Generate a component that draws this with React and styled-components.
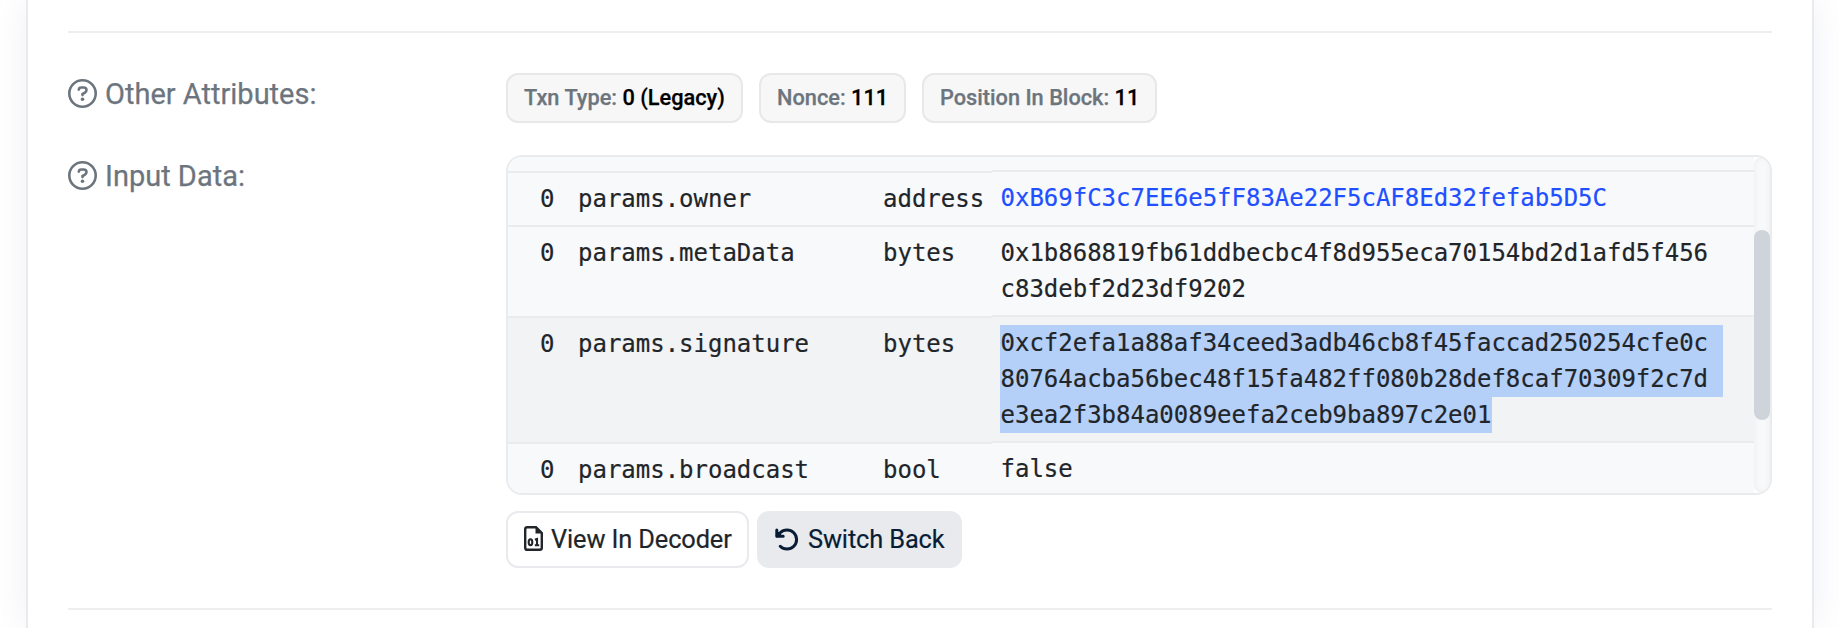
import React from "react";
import styled, { createGlobalStyle } from "styled-components";

const Global = createGlobalStyle`
  * { box-sizing: border-box; }
  body { margin: 0; background: #fff; overflow: hidden; font-family: Roboto, "Liberation Sans", sans-serif; }
`;

const Page = styled.main`
  height: 628px;
  padding: 0 24px 0 26px;
  overflow: hidden;
`;

const Card = styled.section`
  height: 628px;
  border: solid #e9eaee;
  border-width: 0 2px;
  padding: 31px 40px 0;
  box-shadow: 0 0 32px rgba(140, 152, 190, 0.14);
`;

const Divider = styled.hr`
  height: 2px;
  margin: 0;
  border: 0;
  background: #edeef0;
`;

const Row = styled.div`
  display: grid;
  grid-template-columns: 438px 1266px;
  padding-top: ${(p) => p.$top}px;
`;

const Label = styled.div`
  display: flex;
  align-items: flex-start;
  gap: 8px;
  height: 44px;
  color: #6c757d;
  font-size: 29px;
  line-height: 42px;
  white-space: nowrap;
  -webkit-text-stroke: 0.25px currentColor;
  svg { margin-top: 6px; flex: none; }
`;

const Badges = styled.div`
  display: flex;
  gap: 16px;
`;

const Badge = styled.div`
  width: ${(p) => p.$width}px;
  height: 50px;
  padding-left: 16px;
  border: 2px solid #e7e8e9;
  border-radius: 12px;
  background: #f7f7f7;
  color: #6c757d;
  font-size: 21.75px;
  font-weight: 500;
  line-height: 46px;
  white-space: nowrap;
  -webkit-text-stroke: 0.25px currentColor;
  b { color: #000; font-weight: 500; }
`;

const DataBox = styled.div`
  display: flex;
  height: 340px;
  border: 2px solid #e9ebed;
  border-radius: 16px;
  overflow: hidden;
`;

const Params = styled.div`
  display: grid;
  grid-template-columns: 484px 762px;
  width: 1246px;
  background: #f8f9fb;
  color: #212529;
  font-family: "DejaVu Sans Mono", "Liberation Mono", monospace;
  font-size: 24px;
  letter-spacing: -0.01px;
  line-height: 36px;
  -webkit-text-stroke: 0.2px currentColor;
`;

const Column = styled.div`
  display: flex;
  flex-direction: column;
  padding-top: ${(p) => p.$top}px;
`;

const Meta = styled.div`
  display: grid;
  grid-template-columns: 70px 305px 109px;
  height: ${(p) => p.$height}px;
  padding-top: 8px;
  border-top: 2px solid #e9ebed;
  background: ${(p) => (p.$hover ? "#f1f3f5" : "transparent")};
  span:first-child { padding-left: 32px; }
`;

const Value = styled.div`
  height: ${(p) => p.$height}px;
  padding: 8px 0 0 8px;
  border-top: 2px solid #e9ebed;
  background: ${(p) => (p.$hover ? "#f1f3f5" : "transparent")};
  color: ${(p) => (p.$link ? "#1f4fff" : "inherit")};
`;

const Line = styled.div`
  width: ${(p) => (p.$width ? p.$width + "px" : "auto")};
  height: 36px;
  text-indent: 0.5px;
  white-space: nowrap;
  background: ${(p) => (p.$selected ? "#b4d0f8" : "transparent")};
`;

const Track = styled.div`
  width: 16px;
  height: 336px;
  padding-top: 73px;
  border-radius: 8px;
  background: #f8f9fa;
  box-shadow: inset 0 0 6px rgba(0, 0, 0, 0.06);
`;

const Thumb = styled.div`
  height: 190px;
  border-radius: 8px;
  background: #ced4d9;
`;

const Buttons = styled.div`
  display: flex;
  gap: 8px;
  padding: 16px 0 40px;
`;

const Button = styled.button`
  display: flex;
  align-items: center;
  gap: ${(p) => p.$gap}px;
  width: ${(p) => p.$width}px;
  height: 57px;
  padding: 0 0 0 16px;
  border: 2px solid #e9eaee;
  border-radius: 12px;
  background: ${(p) => (p.$filled ? "#e9eaee" : "#fff")};
  color: ${(p) => (p.$filled ? "#081d35" : "#212529")};
  font: 400 25.375px/53px Roboto, "Liberation Sans", sans-serif;
  letter-spacing: -0.12px;
  white-space: nowrap;
  -webkit-text-stroke: 0.2px currentColor;
  svg { flex: none; margin-bottom: 2px; }
`;

const HelpIcon = () => (
  <svg width="29" height="29" viewBox="0 0 29 29" fill="none" stroke="currentColor">
    <circle cx="14.5" cy="14.5" r="13.2" strokeWidth="2.6" />
    <path d="M10.8 10.6Q11.1 8.5 13.2 8.5H15.6Q18.5 8.5 18.5 11.1Q18.5 12.7 17 13.6L14.5 15.1V16.1" strokeWidth="2.6" strokeLinecap="round" />
    <circle cx="14.5" cy="20.2" r="1.8" fill="currentColor" stroke="none" />
  </svg>
);

const FileIcon = () => (
  <svg width="19" height="25" viewBox="0 0 19 25" fill="none" stroke="currentColor">
    <path d="M3.2 1.2H12L17.8 7V21.8Q17.8 23.8 15.8 23.8H3.2Q1.2 23.8 1.2 21.8V3.2Q1.2 1.2 3.2 1.2Z" strokeWidth="2.4" />
    <path d="M11.5 1V7.5H18Z" fill="currentColor" stroke="none" />
    <ellipse cx="6.5" cy="16.2" rx="1.8" ry="2.9" strokeWidth="2.1" />
    <path d="M10.9 13.7L13 13V19.1M10.8 19.2H15.2" strokeWidth="2.1" />
  </svg>
);

const UndoIcon = () => (
  <svg width="24" height="24" viewBox="0 0 24 24" fill="none" stroke="currentColor" strokeWidth="3" strokeLinecap="round" strokeLinejoin="round">
    <path d="M1.8 3V9.2H8.2" />
    <path d="M2.2 8.8L5.2 5.7A9.6 9.6 0 1 1 5.2 19.3" />
    <path d="M1.8 4.2V9.2H6.8Z" fill="currentColor" strokeWidth="1" />
  </svg>
);

const PARAMS = [
  { name: "params.owner", type: "address", h: 54, vh: 55, lines: [["0xB69fC3c7EE6e5fF83Ae22F5cAF8Ed32fefab5D5C"]], link: true },
  { name: "params.metaData", type: "bytes", h: 91, vh: 90, lines: [["0x1b868819fb61ddbecbc4f8d955eca70154bd2d1afd5f456"], ["c83debf2d23df9202"]] },
  { name: "params.signature", type: "bytes", h: 126, vh: 126, hover: true, lines: [["0xcf2efa1a88af34ceed3adb46cb8f45faccad250254cfe0c", 723], ["80764acba56bec48f15fa482ff080b28def8caf70309f2c7d", 723], ["e3ea2f3b84a0089eefa2ceb9ba897c2e01", 492]] },
  { name: "params.broadcast", type: "bool", h: 54, vh: 54, lines: [["false"]] },
];

export default function App() {
  return (
    <Page>
      <Global />
      <Card>
        <Divider />
        <Row $top={40}>
          <Label><HelpIcon />Other Attributes:</Label>
          <Badges>
            <Badge $width={237}>Txn Type: <b>0 (Legacy)</b></Badge>
            <Badge $width={147}>Nonce: <b>111</b></Badge>
            <Badge $width={235}>Position In Block: <b>11</b></Badge>
          </Badges>
        </Row>
        <Row $top={32}>
          <Label><HelpIcon />Input Data:</Label>
          <div>
            <DataBox>
              <Params>
                <Column $top={14}>
                  {PARAMS.map((p) => (
                    <Meta key={p.name} $height={p.h} $hover={p.hover}>
                      <span>0</span><span>{p.name}</span><span>{p.type}</span>
                    </Meta>
                  ))}
                </Column>
                <Column $top={13}>
                  {PARAMS.map((p) => (
                    <Value key={p.name} $height={p.vh} $hover={p.hover} $link={p.link}>
                      {p.lines.map(([text, width]) => (
                        <Line key={text} $width={width} $selected={!!width}>{text}</Line>
                      ))}
                    </Value>
                  ))}
                </Column>
              </Params>
              <Track><Thumb /></Track>
            </DataBox>
            <Buttons>
              <Button $width={243} $gap={8}><FileIcon />View In Decoder</Button>
              <Button $width={205} $gap={9} $filled><UndoIcon />Switch Back</Button>
            </Buttons>
          </div>
        </Row>
        <Divider />
      </Card>
    </Page>
  );
}
